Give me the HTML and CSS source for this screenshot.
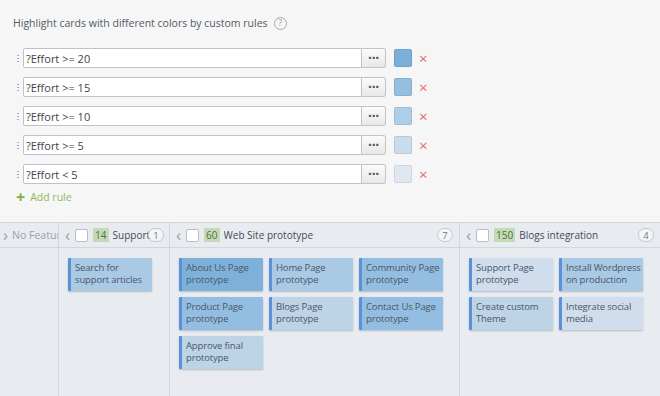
FILE: index.html
```html
<!DOCTYPE html>
<html lang="en">
  <head>
    <meta charset="UTF-8" />
    <title>Card highlight rules</title>
    <link rel="stylesheet" href="styles.css">
  </head>
  <body>
    <section class="settings">
      <div class="title">
        Highlight cards with different colors by custom rules
        <span class="help">?</span>
      </div>
      <div class="rules">
        <div class="rule">
          <span class="grip"></span>
          <div class="field"><input type="text" value="?Effort >= 20" /><button class="more">&middot;&middot;&middot;</button></div>
          <span class="swatch c1"></span>
          <span class="remove">&times;</span>
        </div>
        <div class="rule">
          <span class="grip"></span>
          <div class="field"><input type="text" value="?Effort >= 15" /><button class="more">&middot;&middot;&middot;</button></div>
          <span class="swatch c2"></span>
          <span class="remove">&times;</span>
        </div>
        <div class="rule">
          <span class="grip"></span>
          <div class="field"><input type="text" value="?Effort >= 10" /><button class="more">&middot;&middot;&middot;</button></div>
          <span class="swatch c3"></span>
          <span class="remove">&times;</span>
        </div>
        <div class="rule">
          <span class="grip"></span>
          <div class="field"><input type="text" value="?Effort >= 5" /><button class="more">&middot;&middot;&middot;</button></div>
          <span class="swatch c4"></span>
          <span class="remove">&times;</span>
        </div>
        <div class="rule">
          <span class="grip"></span>
          <div class="field"><input type="text" value="?Effort < 5" /><button class="more">&middot;&middot;&middot;</button></div>
          <span class="swatch c5"></span>
          <span class="remove">&times;</span>
        </div>
      </div>
      <div class="add-rule"><span class="plus">+</span> Add rule</div>
    </section>

    <section class="board">
      <div class="column collapsed">
        <div class="col-head"><span class="arrow">&rsaquo;</span>No Features</div>
        <div class="col-body"></div>
      </div>

      <div class="column support">
        <div class="col-head">
          <span class="arrow">&lsaquo;</span>
          <span class="check"></span>
          <span class="badge">14</span>
          <span class="name">Support</span>
          <span class="count">1</span>
        </div>
        <div class="col-body cards one">
          <div class="card e2">Search for support articles</div>
        </div>
      </div>

      <div class="column website">
        <div class="col-head">
          <span class="arrow">&lsaquo;</span>
          <span class="check"></span>
          <span class="badge">60</span>
          <span class="name">Web Site prototype</span>
          <span class="count">7</span>
        </div>
        <div class="col-body cards three">
          <div class="card e0">About Us Page prototype</div>
          <div class="card e2">Home Page prototype</div>
          <div class="card e1">Community Page prototype</div>
          <div class="card e1">Product Page prototype</div>
          <div class="card e3">Blogs Page prototype</div>
          <div class="card e1">Contact Us Page prototype</div>
          <div class="card e3">Approve final prototype</div>
        </div>
      </div>

      <div class="column blogs">
        <div class="col-head">
          <span class="arrow">&lsaquo;</span>
          <span class="check"></span>
          <span class="badge">150</span>
          <span class="name">Blogs integration</span>
          <span class="count">4</span>
        </div>
        <div class="col-body cards two">
          <div class="card e4">Support Page prototype</div>
          <div class="card e2">Install Wordpress on production</div>
          <div class="card e3">Create custom Theme</div>
          <div class="card e4">Integrate social media</div>
        </div>
      </div>
    </section>
  </body>
</html>
```

FILE: styles.css
```css
* {
  margin: 0;
  padding: 0;
  box-sizing: border-box;
}

body {
  width: 660px;
  height: 396px;
  overflow: hidden;
  font-family: "Open Sans", sans-serif;
  font-size: 10.5px;
  color: #555;
  background-color: #f6f6f6;
}

/* settings panel */
.settings {
  padding: 15px 0 0 13px;
  height: 222px;
}
.title {
  display: flex;
  align-items: center;
  gap: 6px;
  line-height: 16px;
  color: #505a66;
}
.help {
  display: inline-flex;
  justify-content: center;
  align-items: center;
  width: 13px;
  height: 13px;
  border: 1px solid #a9a9a9;
  border-radius: 50%;
  font-size: 9px;
  color: #999;
}
.rules {
  margin-top: 17px;
  display: flex;
  flex-direction: column;
  gap: 9px;
}
.rule {
  display: flex;
  align-items: center;
  height: 20px;
}
.grip {
  width: 2px;
  height: 8px;
  margin: 0 4px 0 4px;
  background-image: radial-gradient(circle, #aaa 0.8px, transparent 1px);
  background-size: 2px 3px;
}
.field {
  display: flex;
  width: 363px;
  height: 20px;
}
.field input {
  flex: 1;
  height: 20px;
  border: 1px solid #bcc3cc;
  border-radius: 2px 0 0 2px;
  padding: 0 2px;
  font-family: "Open Sans", sans-serif;
  font-size: 11px;
  color: #444;
  background: #fff;
}
.more {
  width: 24px;
  height: 20px;
  border: 1px solid #c3c3c3;
  border-left: none;
  border-radius: 0 3px 3px 0;
  background: linear-gradient(#fbfbfb, #e8e8e8);
  font-size: 14px;
  font-weight: bold;
  line-height: 14px;
  color: #555;
  letter-spacing: -1px;
}
.swatch {
  width: 18px;
  height: 18px;
  margin-left: 8px;
  border: 1px solid rgba(0, 0, 0, 0.08);
  border-radius: 2px;
}
.c1 { background-color: #7aafd8; }
.c2 { background-color: #94bfe1; }
.c3 { background-color: #aecde8; }
.c4 { background-color: #c8dcec; }
.c5 { background-color: #dfe8f1; }
.remove {
  margin-left: 7px;
  font-size: 15px;
  line-height: 14px;
  color: #e46b6b;
}
.add-rule {
  margin-top: 6px;
  padding-left: 3px;
  color: #8fba5a;
  display: flex;
  align-items: center;
  gap: 5px;
}
.plus {
  font-size: 16px;
  font-weight: bold;
  line-height: 12px;
  color: #7fae45;
}

/* board */
.board {
  display: flex;
  height: 174px;
  background-color: #e8ebf0;
  border-top: 1px solid #d3d7dd;
}
.column {
  display: flex;
  flex-direction: column;
  border-right: 1px solid #d3d7dd;
}
.collapsed { width: 59px; }
.support { width: 111px; }
.website { width: 290px; }
.blogs { flex: 1; border-right: none; }
.col-head {
  display: flex;
  align-items: center;
  height: 25px;
  padding: 0 6px;
  border-bottom: 1px solid #d3d7dd;
  white-space: nowrap;
  overflow: hidden;
  color: #444c56;
  font-size: 10px;
}
.collapsed .col-head {
  color: #9aa1aa;
  padding-left: 3px;
  font-size: 10.5px;
}
.collapsed .arrow { margin-right: 4px; }
.arrow {
  font-size: 17px;
  line-height: 14px;
  color: #9aa1aa;
  margin-right: 5px;
}
.check {
  width: 13px;
  height: 13px;
  background: #fff;
  border: 1px solid #b8bec6;
  border-radius: 2px;
  margin-right: 5px;
  flex-shrink: 0;
}
.badge {
  padding: 0 2px;
  height: 14px;
  line-height: 14px;
  background-color: #c2dbb3;
  color: #556b4d;
  font-size: 10px;
  margin-right: 4px;
}
.name {
  flex: 1;
  overflow: hidden;
}
.count {
  display: inline-flex;
  justify-content: center;
  align-items: center;
  min-width: 16px;
  height: 14px;
  padding: 0 4px;
  border: 1px solid #c3c8cf;
  border-radius: 8px;
  background: #f4f5f7;
  font-size: 9.5px;
  color: #777;
  flex-shrink: 0;
}
.support .col-head { padding-right: 3px; }
.support .name { flex: none; margin-right: -2px; }

.cards {
  display: grid;
  grid-auto-rows: 33px;
  column-gap: 6px;
  row-gap: 6px;
  padding: 10px 9px;
  align-content: start;
}
.one { grid-template-columns: 84px; }
.two { grid-template-columns: repeat(2, 84px); }
.three { grid-template-columns: repeat(3, 84px); }

.card {
  padding: 4px 0 0 4px;
  border-left: 3px solid #5b91d8;
  border-radius: 1px;
  box-shadow: 0 1px 2px rgba(0, 0, 0, 0.22);
  font-size: 9.5px;
  letter-spacing: -0.15px;
  line-height: 11.5px;
  color: #4a5868;
}
.e0 { background-color: #7eb1da; }
.e1 { background-color: #93bee1; }
.e2 { background-color: #a9c9e4; }
.e3 { background-color: #bdd3e6; }
.e4 { background-color: #cfdded; }
```
